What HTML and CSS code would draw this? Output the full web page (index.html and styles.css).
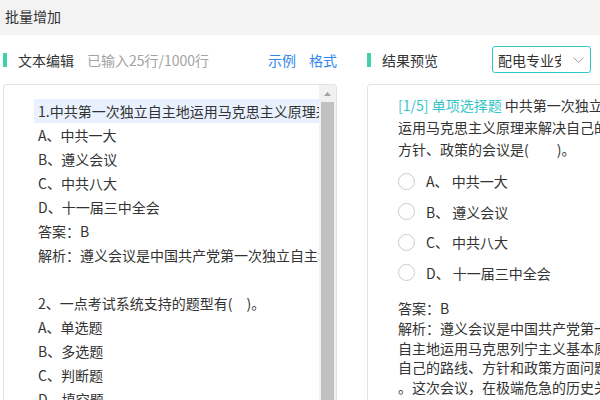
FILE: index.html
```html
<!DOCTYPE html>
<html lang="zh-CN">
<head>
<meta charset="utf-8">
<title>批量增加</title>
<link rel="stylesheet" href="styles.css">
</head>
<body>
<div class="page">
  <header class="topbar">批量增加</header>
  <main class="columns">
    <section class="col col-left">
      <div class="col-head">
        <div class="head-main">
          <span class="mark"></span>
          <span class="head-title">文本编辑</span>
          <span class="head-count">已输入25行/1000行</span>
        </div>
        <div class="head-links">
          <a class="link">示例</a>
          <a class="link">格式</a>
        </div>
      </div>
      <div class="editor">
        <div class="editor-text">
          <div class="line active">1.中共第一次独立自主地运用马克思主义原理来解决自己的路线、方针、政策的会议是(　　)。</div>
          <div class="line">A、中共一大</div>
          <div class="line">B、遵义会议</div>
          <div class="line">C、中共八大</div>
          <div class="line">D、十一届三中全会</div>
          <div class="line">答案：B</div>
          <div class="line">解析：遵义会议是中国共产党第一次独立自主地运用马克思列宁主义基本原理解决自己的路线、方针和政策方面问题的会议。</div>
          <div class="line"> </div>
          <div class="line">2、一点考试系统支持的题型有(　)。</div>
          <div class="line">A、单选题</div>
          <div class="line">B、多选题</div>
          <div class="line">C、判断题</div>
          <div class="line">D、填空题</div>
        </div>
        <div class="vscroll">
          <div class="vscroll-btn"><svg width="7" height="4" viewBox="0 0 7 4"><path d="M0 4 L3.5 0 L7 4 Z" fill="#a3a3a3"/></svg></div>
          <div class="vscroll-thumb"></div>
        </div>
      </div>
    </section>
    <section class="col col-right">
      <div class="col-head">
        <div class="head-main">
          <span class="mark"></span>
          <span class="head-title">结果预览</span>
        </div>
        <div class="select">
          <span class="select-text">配电专业安全知识题库</span>
          <svg class="chevron" width="11" height="6" viewBox="0 0 11 6"><path d="M0.5 0.5 L5.5 5.5 L10.5 0.5" fill="none" stroke="#a0a0a0" stroke-width="1"/></svg>
        </div>
      </div>
      <div class="preview">
        <p class="q"><span class="q-tag">[1/5] 单项选择题</span> 中共第一次独立自主地运用马克思主义原理来解决自己的路线、方针、政策的会议是(　　)。</p>
        <ul class="opts">
          <li class="opt"><span class="radio"></span><span class="opt-label">A、 中共一大</span></li>
          <li class="opt"><span class="radio"></span><span class="opt-label">B、 遵义会议</span></li>
          <li class="opt"><span class="radio"></span><span class="opt-label">C、 中共八大</span></li>
          <li class="opt"><span class="radio"></span><span class="opt-label">D、 十一届三中全会</span></li>
        </ul>
        <p class="answer">答案：B</p>
        <p class="analysis">解析：遵义会议是中国共产党第一次独立自主地运用马克思列宁主义基本原理解决自己的路线、方针和政策方面问题的会议。这次会议，在极端危急的历史关头，挽救了党，挽救了红军，挽救了中国革命。</p>
      </div>
    </section>
  </main>
</div>
</body>
</html>
```

FILE: styles.css
```css
html, body {
  margin: 0;
  padding: 0;
  background: #fff;
  overflow: hidden;
}
body {
  font-family: "Microsoft YaHei", "Noto Sans CJK SC", sans-serif;
  font-size: 14px;
  color: #333;
}
.page {
  width: 600px;
  height: 400px;
  overflow: hidden;
}
.topbar {
  display: block;
  height: 35px;
  line-height: 33px;
  background: #f3f3f3;
  padding-left: 5px;
  color: #333;
}
.columns {
  display: flex;
  gap: 30px;
  padding-left: 3px;
  height: 365px;
}
.col {
  flex: none;
  display: flex;
  flex-direction: column;
}
.col-left { width: 334px; }
.col-right { width: 302px; }
.col-head {
  height: 27px;
  padding: 11px 0;
  display: flex;
  align-items: center;
}
.col-left .col-head { justify-content: space-between; }
.head-main {
  display: flex;
  align-items: center;
}
.mark {
  width: 4px;
  height: 14px;
  background: #3fd2a8;
  flex: none;
}
.head-title { margin-left: 11px; color: #333; }
.head-count { margin-left: 13px; color: #a3a3a3; }
.head-links {
  display: flex;
  gap: 13px;
}
.link { color: #2f88f0; cursor: pointer; }
.select {
  margin-left: 54px;
  width: 99px;
  height: 27px;
  box-sizing: border-box;
  border: 1px solid #2fc8c8;
  border-radius: 3px;
  display: flex;
  align-items: center;
  padding-left: 5px;
}
.select-text {
  width: 63px;
  overflow: hidden;
  white-space: nowrap;
  color: #333;
}
.chevron { margin-left: 12px; flex: none; }

.editor {
  flex: 1;
  min-height: 0;
  border: 1px solid #e2e2e2;
  border-bottom: none;
  border-radius: 4px 4px 0 0;
  display: flex;
  overflow: hidden;
}
.editor-text {
  flex: 1;
  min-width: 0;
  overflow: hidden;
  padding: 14px 0 0 30px;
}
.line {
  height: 24px;
  line-height: 24px;
  white-space: pre;
  overflow: hidden;
  padding-left: 4px;
  color: #333;
}
.line.active { background: #e8f1fd; }
.vscroll {
  width: 17px;
  flex: none;
  background: #f1f1f1;
  display: flex;
  flex-direction: column;
}
.vscroll-btn {
  height: 17px;
  display: flex;
  align-items: center;
  justify-content: center;
}
.vscroll-thumb {
  flex: 1;
  margin: 0 2px;
  background: #c1c1c1;
}

.preview {
  flex: 1;
  border: 1px solid #e4e4e4;
  border-right: none;
  border-bottom: none;
  border-radius: 4px 0 0 0;
  padding: 9px 15px 0 30px;
  color: #333;
  overflow: hidden;
}
.q {
  margin: 0;
  line-height: 22px;
}
.q-tag { color: #36c6c9; }
.opts {
  list-style: none;
  margin: 6px 0 0;
  padding: 0;
}
.opt {
  height: 30.5px;
  display: flex;
  align-items: center;
}
.radio {
  width: 17px;
  height: 17px;
  box-sizing: border-box;
  border: 1.5px solid #cbcbcb;
  border-radius: 50%;
  margin-right: 11px;
  flex: none;
}
.answer {
  margin: 9px 0 0;
  line-height: 22px;
}
.analysis {
  margin: 0;
  line-height: 19.5px;
  line-break: anywhere;
}
```
